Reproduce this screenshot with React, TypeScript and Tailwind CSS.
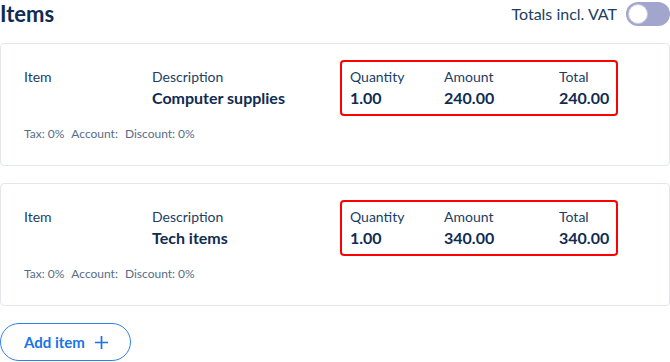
import React from "react";

const items = [
  { desc: "Computer supplies", qty: "1.00", amount: "240.00", total: "240.00" },
  { desc: "Tech items", qty: "1.00", amount: "340.00", total: "340.00" },
];

function Card({ desc, qty, amount, total }: { desc: string; qty: string; amount: string; total: string }) {
  return (
    <div className="border border-[#e4e6ef] rounded-[4px] bg-white pt-4 pb-[24px] pl-[23px]">
      <div className="flex items-start">
        <div className="w-[128px] pt-[9px] text-[14px] leading-[15px] text-[#203e63]">Item</div>
        <div className="w-[188px] pt-[9px]">
          <div className="text-[14px] leading-[15px] text-[#203e63]">Description</div>
          <div className="mt-[5px] text-[16px] leading-[18px] font-bold text-[#0f2c52]">{desc}</div>
        </div>
        <div className="w-[278px] h-[56px] border-2 border-[#ff0000] rounded-[4px] flex pl-[8px] pt-[7px]">
          <div className="w-[94px]">
            <div className="text-[14px] leading-[15px] text-[#203e63]">Quantity</div>
            <div className="mt-[5px] text-[16px] leading-[18px] font-bold text-[#0f2c52]">{qty}</div>
          </div>
          <div className="w-[115px]">
            <div className="text-[14px] leading-[15px] text-[#203e63]">Amount</div>
            <div className="mt-[5px] text-[16px] leading-[18px] font-bold text-[#0f2c52]">{amount}</div>
          </div>
          <div>
            <div className="text-[14px] leading-[15px] text-[#203e63]">Total</div>
            <div className="mt-[5px] text-[16px] leading-[18px] font-bold text-[#0f2c52]">{total}</div>
          </div>
        </div>
      </div>
      <div className="mt-[11px] flex gap-[7px] text-[12px] leading-[14px] text-[#566d88]">
        <span>Tax: 0%</span>
        <span>Account:</span>
        <span>Discount: 0%</span>
      </div>
    </div>
  );
}

export default function App() {
  return (
    <div className="w-[670px] h-[362px] bg-white overflow-hidden" style={{ fontFamily: "Lato, 'Open Sans', sans-serif" }}>
      <div className="flex items-center justify-between h-[27px]">
        <h1 className="text-[22px] leading-[26px] font-bold text-[#0f2c52]">Items</h1>
        <div className="flex items-center gap-[9px]">
          <span className="text-[16px] leading-[20px] text-[#203e63]">Totals incl. VAT</span>
          <div className="w-[44px] h-[24px] rounded-full bg-[#a2a6cc] flex items-center pl-[2px]">
            <div className="w-[20px] h-[20px] rounded-full bg-white border border-[#c9cbe0]" />
          </div>
        </div>
      </div>
      <div className="mt-[16px] flex flex-col gap-[17px] w-[670px]">
        {items.map((it) => (
          <Card key={it.desc} {...it} />
        ))}
      </div>
      <button className="mt-[17px] h-[38px] w-[131px] rounded-full border border-[#2f80ed] flex items-center pl-[23px] gap-[9px] text-[#1a73e8] text-[15px] font-bold">
        <span>Add item</span>
        <svg width="15" height="15" viewBox="0 0 16 16" fill="none" stroke="currentColor" strokeWidth="1.8">
          <path d="M8 1v14M1 8h14" />
        </svg>
      </button>
    </div>
  );
}
